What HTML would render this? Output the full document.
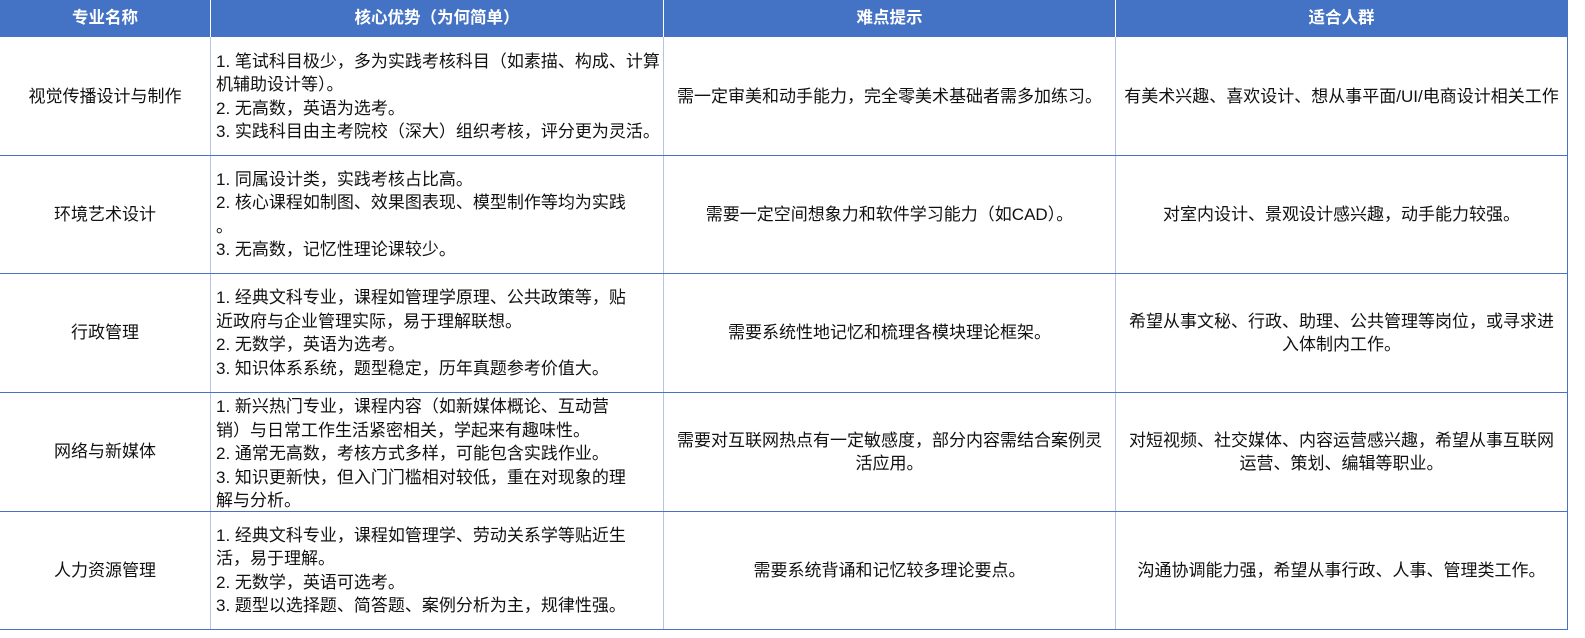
<!DOCTYPE html>
<html><head><meta charset="utf-8"><style>
body{margin:0;width:1585px;height:638px;background:#fff;position:relative;overflow:hidden;font-family:"Liberation Sans","Noto Sans CJK SC",sans-serif;font-size:17px;color:#111;}
.c{position:absolute;display:flex;align-items:center;justify-content:center;text-align:center;overflow:hidden;box-sizing:border-box;line-height:23.5px;white-space:nowrap}
.l{justify-content:flex-start;text-align:left;padding-left:5px}
.h{background:#4472c4;color:#fff;font-weight:bold;height:37px;top:0;font-size:16.5px}
.vl{position:absolute;top:37px;width:1px;height:593px;background:#b4c6e7}
.hl{position:absolute;left:0;width:1567px;height:1px;background:#4a72c4}
</style></head><body>
<div class="c h" style="left:0;width:210px">专业名称</div>
<div class="c h" style="left:211px;width:452px">核心优势（为何简单）</div>
<div class="c h" style="left:664px;width:451px">难点提示</div>
<div class="c h" style="left:1116px;width:451px">适合人群</div>
<div class="vl" style="left:210px"></div><div class="vl" style="left:663px"></div><div class="vl" style="left:1115px"></div><div class="vl" style="left:1567px;top:0;height:630px;background:#4a72c4"></div>
<div class="hl" style="top:155px"></div><div class="hl" style="top:273px"></div><div class="hl" style="top:392px"></div><div class="hl" style="top:511px"></div><div class="hl" style="top:629px"></div>

<div class="c" style="left:0;width:210px;top:38px;height:117px">视觉传播设计与制作</div>
<div class="c l" style="left:211px;width:452px;top:38px;height:117px">1. 笔试科目极少，多为实践考核科目（如素描、构成、计算<br>机辅助设计等）。<br>2. 无高数，英语为选考。<br>3. 实践科目由主考院校（深大）组织考核，评分更为灵活。</div>
<div class="c" style="left:664px;width:451px;top:38px;height:117px">需一定审美和动手能力，完全零美术基础者需多加练习。</div>
<div class="c" style="left:1116px;width:451px;top:38px;height:117px">有美术兴趣、喜欢设计、想从事平面/UI/电商设计相关工作</div>

<div class="c" style="left:0;width:210px;top:156px;height:117px">环境艺术设计</div>
<div class="c l" style="left:211px;width:452px;top:156px;height:117px">1. 同属设计类，实践考核占比高。<br>2. 核心课程如制图、效果图表现、模型制作等均为实践<br>。<br>3. 无高数，记忆性理论课较少。</div>
<div class="c" style="left:664px;width:451px;top:156px;height:117px">需要一定空间想象力和软件学习能力（如CAD）。</div>
<div class="c" style="left:1116px;width:451px;top:156px;height:117px">对室内设计、景观设计感兴趣，动手能力较强。</div>

<div class="c" style="left:0;width:210px;top:274px;height:118px">行政管理</div>
<div class="c l" style="left:211px;width:452px;top:274px;height:118px">1. 经典文科专业，课程如管理学原理、公共政策等，贴<br>近政府与企业管理实际，易于理解联想。<br>2. 无数学，英语为选考。<br>3. 知识体系系统，题型稳定，历年真题参考价值大。</div>
<div class="c" style="left:664px;width:451px;top:274px;height:118px">需要系统性地记忆和梳理各模块理论框架。</div>
<div class="c" style="left:1116px;width:451px;top:274px;height:118px">希望从事文秘、行政、助理、公共管理等岗位，或寻求进<br>入体制内工作。</div>

<div class="c" style="left:0;width:210px;top:393px;height:118px">网络与新媒体</div>
<div class="c l" style="left:211px;width:452px;top:393px;height:118px;align-items:flex-start;padding-top:2px">1. 新兴热门专业，课程内容（如新媒体概论、互动营<br>销）与日常工作生活紧密相关，学起来有趣味性。<br>2. 通常无高数，考核方式多样，可能包含实践作业。<br>3. 知识更新快，但入门门槛相对较低，重在对现象的理<br>解与分析。</div>
<div class="c" style="left:664px;width:451px;top:393px;height:118px">需要对互联网热点有一定敏感度，部分内容需结合案例灵<br>活应用。</div>
<div class="c" style="left:1116px;width:451px;top:393px;height:118px">对短视频、社交媒体、内容运营感兴趣，希望从事互联网<br>运营、策划、编辑等职业。</div>

<div class="c" style="left:0;width:210px;top:512px;height:117px">人力资源管理</div>
<div class="c l" style="left:211px;width:452px;top:512px;height:117px">1. 经典文科专业，课程如管理学、劳动关系学等贴近生<br>活，易于理解。<br>2. 无数学，英语可选考。<br>3. 题型以选择题、简答题、案例分析为主，规律性强。</div>
<div class="c" style="left:664px;width:451px;top:512px;height:117px">需要系统背诵和记忆较多理论要点。</div>
<div class="c" style="left:1116px;width:451px;top:512px;height:117px">沟通协调能力强，希望从事行政、人事、管理类工作。</div>
</body></html>
